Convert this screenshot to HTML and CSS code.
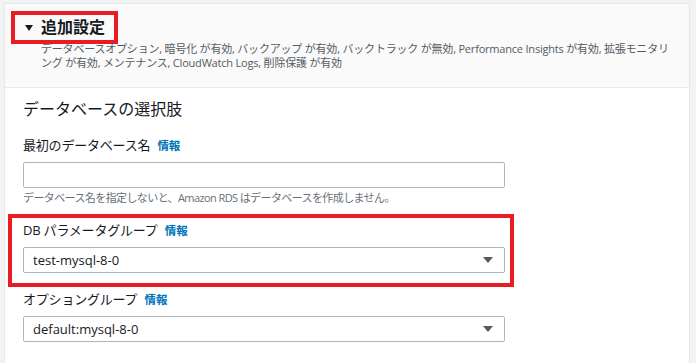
FILE: index.html
```html
<!DOCTYPE html>
<html lang="ja">
<head>
    <meta charset="UTF-8">
    <meta name="viewport" content="width=device-width, initial-scale=1.0">
    <title>追加設定</title>
    <link rel="stylesheet" href="styles.css">
</head>
<body>
    <div class="panel">
        <div class="panel-header">
            <div class="toggle">
                <svg class="caret" width="8" height="6" viewBox="0 0 8 6"><path d="M0 0H8L4 6Z" fill="#16191f"/></svg>
                <span class="title">追加設定</span>
            </div>
            <p class="desc">データベースオプション, 暗号化 が有効, バックアップ が有効, バックトラック が無効, Performance Insights が有効, 拡張モニタリング が有効, メンテナンス, CloudWatch Logs, 削除保護 が有効</p>
        </div>

        <div class="panel-body">
            <h2>データベースの選択肢</h2>
            <div class="fields">
                <div class="field">
                    <label class="label">最初のデータベース名 <a class="info" href="#">情報</a></label>
                    <div class="input"></div>
                    <p class="hint">データベース名を指定しないと、Amazon RDS はデータベースを作成しません。</p>
                </div>

                <div class="field highlight">
                    <label class="label">DB パラメータグループ <a class="info" href="#">情報</a></label>
                    <div class="input select">
                        <span>test-mysql-8-0</span>
                        <svg width="10" height="6" viewBox="0 0 10 6"><path d="M0 0H10L5 6Z" fill="#545b64"/></svg>
                    </div>
                </div>

                <div class="field option">
                    <label class="label">オプショングループ <a class="info" href="#">情報</a></label>
                    <div class="input select">
                        <span>default:mysql-8-0</span>
                        <svg width="10" height="6" viewBox="0 0 10 6"><path d="M0 0H10L5 6Z" fill="#545b64"/></svg>
                    </div>
                </div>
            </div>
        </div>
    </div>
</body>
</html>
```

FILE: styles.css
```css
body {
    margin: 0;
    background-color: #f2f3f3;
    font-family: "Open Sans", "Noto Sans CJK JP", sans-serif;
    color: #16191f;
    overflow: hidden;
}

.panel {
    box-sizing: border-box;
    width: 686px;
    height: 360px;
    margin: 3px 0 0 4px;
    background-color: #fff;
    border: 1px solid #e5e8e8;
    border-bottom: none;
}

.panel-header {
    height: 76px;
    padding: 7px 13px 0 6px;
    background-color: #fafafa;
    border-bottom: 1px solid #e9ebeb;
}

.toggle {
    display: inline-flex;
    align-items: center;
    gap: 8px;
    height: 25px;
    padding: 0 9px 0 10px;
    border: 4px solid #e91c24;
}

.title {
    font-size: 16px;
    font-weight: bold;
    line-height: 25px;
}

.desc {
    margin: -2px 0 0 30px;
    font-size: 11px;
    line-height: 14px;
    letter-spacing: -0.2px;
    color: #545b64;
}

.panel-body {
    padding: 10px 18px 0;
}

h2 {
    margin: 0;
    font-size: 16px;
    font-weight: normal;
    line-height: 22px;
}

.fields {
    width: 482px;
}

.field {
    margin-top: 16px;
}

.label {
    display: block;
    font-size: 13px;
    line-height: 18px;
    letter-spacing: -0.2px;
}

.info {
    margin-left: 4px;
    font-size: 11.5px;
    font-weight: bold;
    color: #0073bb;
    text-decoration: none;
}

.input {
    box-sizing: border-box;
    height: 26px;
    margin-top: 7px;
    border: 1px solid #aab7b8;
    border-radius: 2px;
    background-color: #fff;
}

.select {
    display: flex;
    align-items: center;
    justify-content: space-between;
    padding: 0 11px 0 9px;
    font-size: 13px;
    letter-spacing: 0;
}

.hint {
    margin: 2px 0 0;
    font-size: 11px;
    line-height: 15px;
    letter-spacing: -0.6px;
    color: #687078;
}

.highlight {
    margin: 9px -9px 0 -15px;
    padding: 3px 5px 10px 11px;
    border: 4px solid #e91c24;
}

.option {
    margin-top: 3px;
}
```
